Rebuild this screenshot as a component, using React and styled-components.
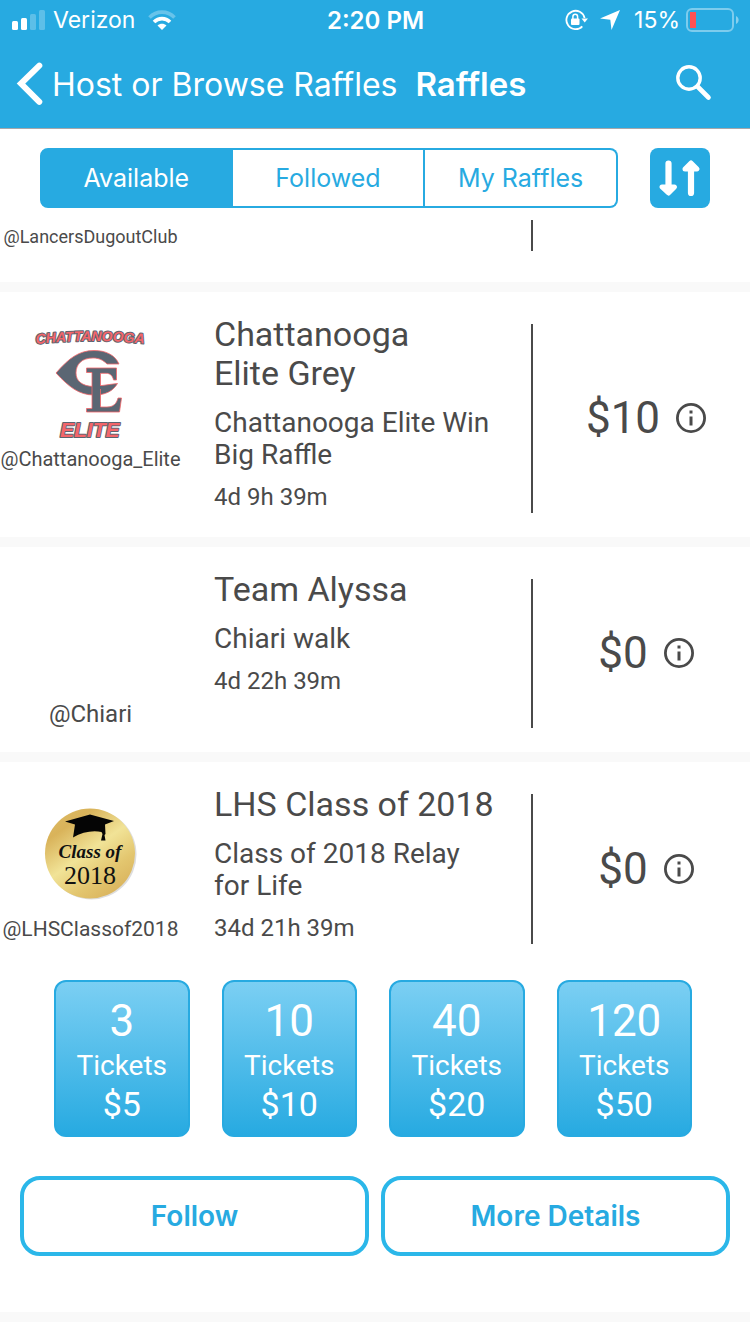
import React, { useState } from 'react';
import styled, { createGlobalStyle } from 'styled-components';

const GlobalStyle = createGlobalStyle`
  * {
    box-sizing: border-box;
  }

  body {
    margin: 0;
    background: #FFFFFF;
    color: #4A4A4A;
    font-family: Roboto, sans-serif;
  }

  button {
    margin: 0;
    padding: 0;
    border: 0;
    background: none;
    cursor: pointer;
  }
`;

const Header = styled.header`
  background: #27AAE1;
  border-bottom: 1px solid #A7A7AA;
  color: #FFFFFF;
  font-family: Inter, sans-serif;
`;

const StatusBar = styled.div`
  display: grid;
  grid-template-columns: 1fr auto 1fr;
  align-items: center;
  height: 40px;
  padding: 0 11px 0 12px;
  font-size: 23px;
`;

const StatusGroup = styled.div`
  display: flex;
  align-items: center;
  justify-content: ${props => (props.$end ? 'flex-end' : 'flex-start')};
  gap: ${props => (props.$end ? 6 : 8)}px;
`;

const StatusIcons = styled.div`
  display: flex;
  align-items: center;
  gap: 12px;
  margin-right: 8px;
`;

const WifiIcon = styled.svg`
  margin-left: 5px;
`;

const Clock = styled.div`
  font-size: 24px;
  font-weight: 600;
`;

const NavBar = styled.nav`
  display: flex;
  align-items: center;
  height: 88px;
  padding: 0 38px 0 16px;
`;

const BackLink = styled.a`
  display: flex;
  align-items: center;
  gap: 8px;
  color: inherit;
  font-size: 32px;
  text-decoration: none;
`;

const PageTitle = styled.h1`
  flex: 1;
  margin: 0 0 0 18px;
  font-size: 33px;
  font-weight: 600;
`;

const IconButton = styled.button`
  display: flex;
  color: inherit;
`;

const Toolbar = styled.div`
  display: flex;
  gap: 32px;
  padding: 19px 40px 12px;
`;

const Segments = styled.div`
  display: grid;
  grid-template-columns: repeat(3, 1fr);
  flex: 1;
  height: 60px;
`;

const Segment = styled.button`
  border: 2px solid #27AAE1;
  background: ${props => (props.$active ? '#27AAE1' : '#FFFFFF')};
  color: ${props => (props.$active ? '#FFFFFF' : '#27AAE1')};
  font-family: Inter, sans-serif;
  font-size: 25px;

  & + & {
    border-left-width: 0;
  }

  &:first-child {
    border-radius: 8px 0 0 8px;
  }

  &:last-child {
    border-radius: 0 8px 8px 0;
  }
`;

const SortButton = styled.button`
  width: 60px;
  height: 60px;
  border-radius: 8px;
  background: #27AAE1;
`;

const Card = styled.article`
  border-bottom: 10px solid #F9F9F9;
`;

const Summary = styled.div`
  display: grid;
  grid-template-columns: 181px 1fr 2px 217px;
  min-height: ${props => (props.$scrolled ? 62 : 205)}px;
`;

const Host = styled.div`
  display: flex;
  flex-direction: column;
  align-items: center;
  padding-top: ${props => (props.$scrolled ? 1 : 32)}px;
`;

const Avatar = styled.div`
  display: flex;
  align-items: center;
  justify-content: center;
  height: 119px;
`;

const Handle = styled.div`
  font-size: ${props => props.$size}px;
  line-height: 32px;
  white-space: nowrap;
`;

const Details = styled.div`
  display: flex;
  flex-direction: column;
  gap: 12px;
  padding: 23px 32px 26px 33px;
`;

const Name = styled.h2`
  margin: 0 0 2px;
  font-size: 34px;
  font-weight: 400;
  line-height: 39px;
  white-space: pre-line;
`;

const Description = styled.div`
  font-size: 28px;
  line-height: 32px;
`;

const TimeLeft = styled.div`
  font-size: 24px;
  line-height: 28px;
`;

const Divider = styled.div`
  margin: ${props => (props.$scrolled ? '0 0 31px' : '32px 0 24px')};
  background: #4A4A4A;
`;

const Price = styled.div`
  display: flex;
  align-items: center;
  justify-content: center;
  gap: 16px;
  padding: 31px 0 24px 9px;
  font-size: 44px;
`;

const Tickets = styled.div`
  display: grid;
  grid-template-columns: repeat(4, 1fr);
  gap: 32px;
  padding: 12px 58px 0 54px;
`;

const Ticket = styled.button`
  display: flex;
  flex-direction: column;
  align-items: center;
  justify-content: center;
  height: 157px;
  border: 2px solid #27AAE1;
  border-radius: 12px;
  background: linear-gradient(#7BCFF3, #27AAE1);
  color: #FFFFFF;
  font-family: Roboto, sans-serif;
`;

const TicketCount = styled.span`
  font-size: 44px;
  line-height: 54px;
`;

const TicketLabel = styled.span`
  font-size: 28px;
  line-height: 36px;
`;

const TicketPrice = styled.span`
  font-size: 34px;
  line-height: 40px;
`;

const Actions = styled.div`
  display: flex;
  gap: 12px;
  padding: 39px 20px 56px;
`;

const ActionButton = styled.button`
  flex: 1;
  height: 80px;
  border: 4px solid #2BB7E9;
  border-radius: 20px;
  color: #27AAE1;
  font-family: Inter, sans-serif;
  font-size: 28px;
  font-weight: 600;
`;

function SignalIcon() {
  return (
    <svg width="33" height="20" viewBox="0 0 33 20" fill="#FFFFFF" aria-hidden="true">
      <rect x="0" y="11" width="6" height="9" rx="1.5" />
      <rect x="9" y="8" width="6" height="12" rx="1.5" />
      <rect x="18" y="4" width="6" height="16" rx="1.5" opacity="0.25" />
      <rect x="27" y="0" width="6" height="20" rx="1.5" opacity="0.25" />
    </svg>
  );
}

function Wifi() {
  return (
    <WifiIcon width="28" height="20" viewBox="0 0 28 20" fill="none" stroke="#FFFFFF" aria-hidden="true">
      <path d="M1.5 7.5C8.5 .3 19.5 .3 26.5 7.5" strokeWidth="3.6" opacity="0.3" />
      <path d="M6 12C10.5 7.5 17.5 7.5 22 12" strokeWidth="3.6" />
      <path d="M14 20L9.5 15.5C12 13.3 16 13.3 18.5 15.5Z" fill="#FFFFFF" stroke="none" />
    </WifiIcon>
  );
}

function RotationLockIcon() {
  return (
    <svg width="23" height="22" viewBox="0 0 23 22" fill="none" aria-hidden="true">
      <path d="M19.6 9A9.2 9.2 0 1 0 17.3 17.3" stroke="#FFFFFF" strokeWidth="1.8" />
      <path d="M16.5 9.5H23L19.7 13.5Z" fill="#FFFFFF" />
      <rect x="6" y="9.5" width="8.5" height="6.5" rx="1" fill="#FFFFFF" />
      <path d="M7.9 10V7.7a2.35 2.35 0 0 1 4.7 0V10" stroke="#FFFFFF" strokeWidth="1.5" />
    </svg>
  );
}

function LocationIcon() {
  return (
    <svg width="20" height="20" viewBox="0 0 20 20" fill="#FFFFFF" aria-hidden="true">
      <path d="M20 0L11.5 20L10.3 9.7L0 8.5Z" />
    </svg>
  );
}

function BatteryIcon() {
  return (
    <svg width="53" height="24" viewBox="0 0 53 24" fill="none" aria-hidden="true">
      <rect x="1" y="1" width="46" height="22" rx="5" stroke="#FFFFFF" strokeOpacity="0.4" strokeWidth="2" />
      <rect x="4" y="4" width="6" height="16" fill="#FF5053" />
      <path d="M50 8C53.5 9.5 53.5 14.5 50 16Z" fill="#FFFFFF" fillOpacity="0.45" />
    </svg>
  );
}

function BackIcon() {
  return (
    <svg width="28" height="44" viewBox="0 0 28 44" fill="none" aria-hidden="true">
      <path d="M23.3 3.7L5 21.5L23.3 39.8" stroke="#FFFFFF" strokeWidth="6" strokeLinecap="round" />
    </svg>
  );
}

function SearchIcon() {
  return (
    <svg width="38" height="38" viewBox="0 0 38 38" fill="none" stroke="#FFFFFF" aria-hidden="true">
      <circle cx="15" cy="13" r="11.2" strokeWidth="3.4" />
      <path d="M23.5 21.5L34.5 32.5" strokeWidth="4.6" strokeLinecap="round" />
    </svg>
  );
}

function SortIcon() {
  return (
    <svg width="60" height="60" viewBox="0 0 60 60" fill="none" stroke="#FFFFFF" strokeLinecap="round" strokeLinejoin="round" aria-hidden="true">
      <path d="M18.5 15.5V42M41 45V18" strokeWidth="6.2" />
      <path d="M12 39L18.5 45L24.5 39ZM35 21L41 15L47 21Z" strokeWidth="5" fill="#FFFFFF" />
    </svg>
  );
}

function InfoIcon() {
  return (
    <svg width="30" height="30" viewBox="0 0 30 30" fill="none" aria-hidden="true">
      <circle cx="15" cy="15" r="13.6" stroke="#4A4A4A" strokeWidth="2.8" />
      <path d="M13.5 7.5h3v3h-3zM13.5 13.5h3v9h-3z" fill="#4A4A4A" />
    </svg>
  );
}

function EliteLogo() {
  return (
    <svg width="116" height="118" viewBox="0 0 116 118" role="img" aria-label="Chattanooga Elite">
      <defs>
        <path id="elite-arc" d="M3 19Q58 13 116 19" />
      </defs>
      <g
        fill="#F4666A"
        stroke="#5B6470"
        strokeWidth="2"
        strokeLinejoin="round"
        paintOrder="stroke"
        fontFamily="'Liberation Sans', sans-serif"
        fontStyle="italic"
        fontWeight="700"
      >
        <text fontSize="14">
          <textPath href="#elite-arc">CHATTANOOGA</textPath>
        </text>
        <text x="27" y="112" fontSize="21">ELITE</text>
      </g>
      <g fill="#5B6673" stroke="#F4666A" strokeWidth="0.8">
        <path d="M86 39H74C70 35 66 33 60 33C49 33 43 39 43 48C43 56 49 61 60 61.5C67 61 75 59.5 84.5 58.5C80 66 73 70 61 70C46 70 36 62 23 48C36 33 46 25.5 61 25.5C73 25.5 82 30 86 39Z" />
        <path d="M53.5 43H83.5V55H80.5C79.5 50.5 77 48.3 73 48.3H67.5V82H74C80 82 83.5 79 85 73H88.5L86.5 87H53.5V83.5H59V47.5H53.5Z" />
      </g>
      <path d="M64 61H73V64H64Z" fill="#5B6673" />
    </svg>
  );
}

function ClassLogo() {
  return (
    <svg width="94" height="94" viewBox="0 0 94 94" role="img" aria-label="Class of 2018">
      <defs>
        <linearGradient id="class-gold" x1="0.1" y1="0" x2="0.8" y2="1">
          <stop offset="0" stopColor="#DDBB66" />
          <stop offset="0.2" stopColor="#D9B35A" />
          <stop offset="0.5" stopColor="#F1E397" />
          <stop offset="0.75" stopColor="#E3C66F" />
          <stop offset="1" stopColor="#D8B05A" />
        </linearGradient>
      </defs>
      <circle cx="47.5" cy="47.5" r="45" fill="#DDDDDD" />
      <circle cx="46" cy="46.5" r="45" fill="url(#class-gold)" />
      <path d="M21 14.5L46 7.5L70 14L61 17.5L61.5 27L60.5 28L61.5 33.5H57L58.5 27L57.5 25C49 23 38 25 29 30.5L31 17.5Z" fill="#050505" />
      <g fill="#111111" textAnchor="middle" fontFamily="'Liberation Serif', serif">
        <text x="46" y="51" fontSize="19" fontStyle="italic" fontWeight="700">Class of</text>
        <text x="46" y="77" fontSize="26">2018</text>
      </g>
    </svg>
  );
}

const raffles = [
  {
    handle: '@Chattanooga_Elite',
    handleSize: 20,
    logo: <EliteLogo />,
    name: 'Chattanooga\nElite Grey',
    description: 'Chattanooga Elite Win Big Raffle',
    timeLeft: '4d 9h 39m',
    price: '$10',
  },
  {
    handle: '@Chiari',
    handleSize: 24,
    name: 'Team Alyssa',
    description: 'Chiari walk',
    timeLeft: '4d 22h 39m',
    price: '$0',
  },
  {
    handle: '@LHSClassof2018',
    handleSize: 21,
    logo: <ClassLogo />,
    name: 'LHS Class of 2018',
    description: 'Class of 2018 Relay for Life',
    timeLeft: '34d 21h 39m',
    price: '$0',
    tickets: [
      { count: 3, price: '$5' },
      { count: 10, price: '$10' },
      { count: 40, price: '$20' },
      { count: 120, price: '$50' },
    ],
  },
];

const tabs = ['Available', 'Followed', 'My Raffles'];

function Raffle({ raffle }) {
  return (
    <Card>
      <Summary>
        <Host>
          <Avatar>{raffle.logo}</Avatar>
          <Handle $size={raffle.handleSize}>{raffle.handle}</Handle>
        </Host>

        <Details>
          <Name>{raffle.name}</Name>
          <Description>{raffle.description}</Description>
          <TimeLeft>{raffle.timeLeft}</TimeLeft>
        </Details>

        <Divider />

        <Price>
          {raffle.price}
          <IconButton type="button" aria-label="Raffle info">
            <InfoIcon />
          </IconButton>
        </Price>
      </Summary>

      {raffle.tickets && (
        <>
          <Tickets>
            {raffle.tickets.map(ticket => (
              <Ticket key={ticket.count} type="button">
                <TicketCount>{ticket.count}</TicketCount>
                <TicketLabel>Tickets</TicketLabel>
                <TicketPrice>{ticket.price}</TicketPrice>
              </Ticket>
            ))}
          </Tickets>

          <Actions>
            <ActionButton type="button">Follow</ActionButton>
            <ActionButton type="button">More Details</ActionButton>
          </Actions>
        </>
      )}
    </Card>
  );
}

export default function App() {
  const [tab, setTab] = useState('Available');

  return (
    <>
      <GlobalStyle />

      <Header>
        <StatusBar>
          <StatusGroup>
            <SignalIcon />
            <span>Verizon</span>
            <Wifi />
          </StatusGroup>

          <Clock>2:20 PM</Clock>

          <StatusGroup $end>
            <StatusIcons>
              <RotationLockIcon />
              <LocationIcon />
            </StatusIcons>
            <span>15%</span>
            <BatteryIcon />
          </StatusGroup>
        </StatusBar>

        <NavBar>
          <BackLink href="#host">
            <BackIcon />
            Host or Browse Raffles
          </BackLink>

          <PageTitle>Raffles</PageTitle>

          <IconButton type="button" aria-label="Search">
            <SearchIcon />
          </IconButton>
        </NavBar>
      </Header>

      <Toolbar>
        <Segments>
          {tabs.map(name => (
            <Segment
              key={name}
              type="button"
              $active={name === tab}
              aria-pressed={name === tab}
              onClick={() => setTab(name)}
            >
              {name}
            </Segment>
          ))}
        </Segments>

        <SortButton type="button" aria-label="Sort">
          <SortIcon />
        </SortButton>
      </Toolbar>

      <main>
        {/* tail end of the raffle that has scrolled under the toolbar */}
        <Card>
          <Summary $scrolled>
            <Host $scrolled>
              <Handle $size={18}>@LancersDugoutClub</Handle>
            </Host>
            <div />
            <Divider $scrolled />
          </Summary>
        </Card>

        {raffles.map(raffle => (
          <Raffle key={raffle.handle} raffle={raffle} />
        ))}
      </main>
    </>
  );
}
